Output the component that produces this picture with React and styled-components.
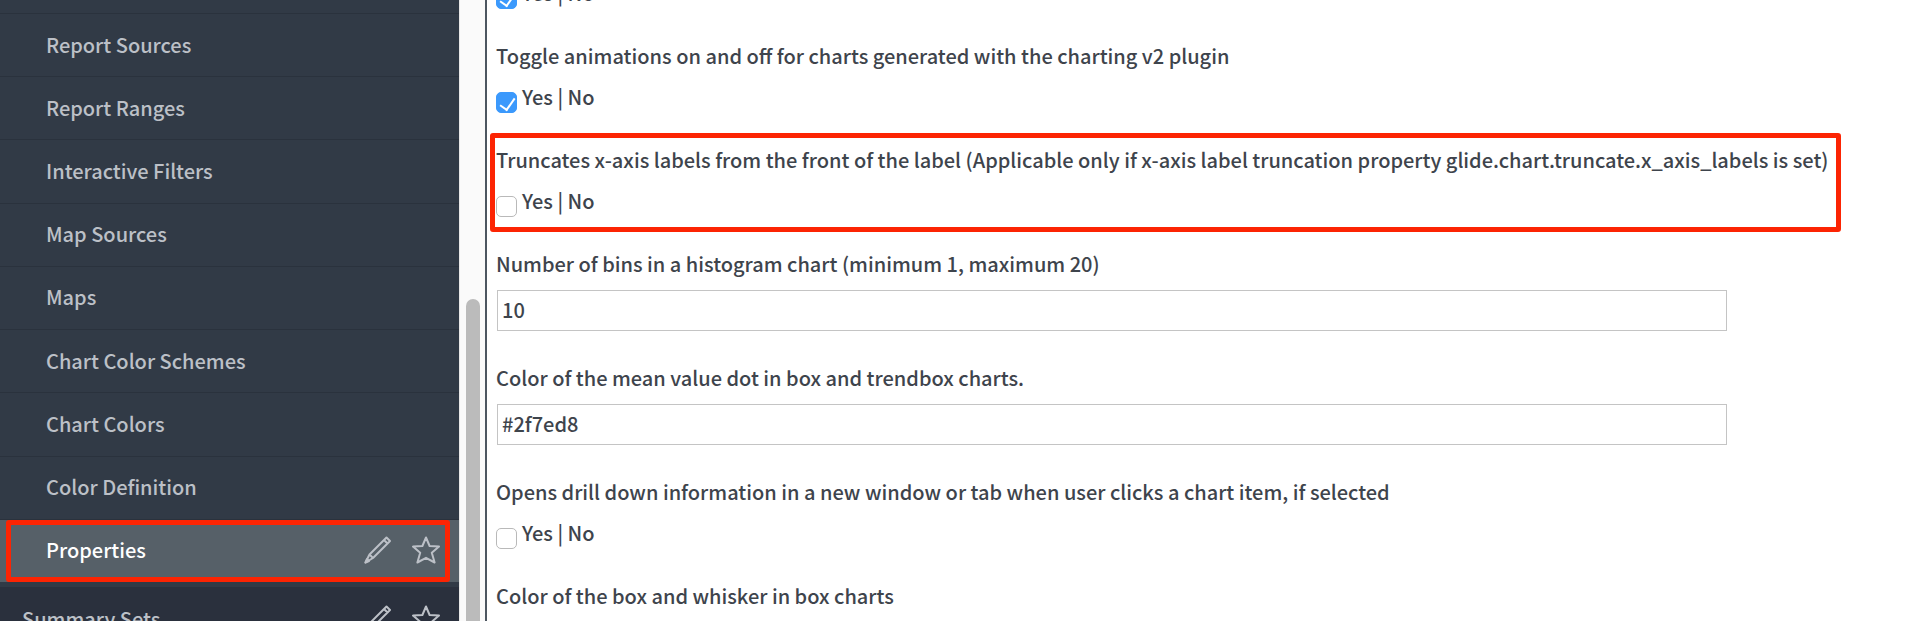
import React from 'react'
import styled, { createGlobalStyle } from 'styled-components'

const navItems = [
    'Report Sources',
    'Report Ranges',
    'Interactive Filters',
    'Map Sources',
    'Maps',
    'Chart Color Schemes',
    'Chart Colors',
    'Color Definition',
    'Properties',
]

const properties = [
    { id: 'animations', type: 'bool', checked: true, label: 'Toggle animations on and off for charts generated with the charting v2 plugin' },
    { id: 'truncate', type: 'bool', marked: true, label: 'Truncates x-axis labels from the front of the label (Applicable only if x-axis label truncation property glide.chart.truncate.x_axis_labels is set)' },
    { id: 'bins', type: 'text', value: '10', label: 'Number of bins in a histogram chart (minimum 1, maximum 20)' },
    { id: 'mean', type: 'text', value: '#2f7ed8', label: 'Color of the mean value dot in box and trendbox charts.' },
    { id: 'drill', type: 'bool', label: 'Opens drill down information in a new window or tab when user clicks a chart item, if selected' },
]

function PencilIcon() {
    return (
        <Icon viewBox="0 0 28 28">
            <path d="M1.5 26.5 L5.5 18.5 L22.5 1.5 L26 5 L9 22 Z M5.5 18.5 L9 22 M20 4 L23.5 7.5" />
            <path d="M1.5 26.5 L3 23 L5 25 Z" fill="currentColor" />
        </Icon>
    )
}

function StarIcon() {
    return (
        <Icon viewBox="0 0 28 28">
            <path d="M14 1.5 L17.6 10 L27 10.6 L19.8 16.7 L22.6 26.5 L14 21.8 L5.4 26.5 L8.2 16.7 L1 10.6 L10.4 10 Z" />
        </Icon>
    )
}

function RowActions({ name }) {
    return (
        <Actions>
            <IconButton aria-label={`Edit ${name}`}><PencilIcon /></IconButton>
            <IconButton aria-label={`Favorite ${name}`}><StarIcon /></IconButton>
        </Actions>
    )
}

function BoolControl({ id, checked }) {
    return (
        <BoolRow>
            <Checkbox type="checkbox" id={id} defaultChecked={checked} />
            <label htmlFor={id}>Yes | No</label>
        </BoolRow>
    )
}

function Property({ id, type, label, value, checked, marked }) {
    return (
        <Field $type={type}>
            <FieldLabel htmlFor={id}>{label}</FieldLabel>
            {type === 'text'
                ? <TextInput id={id} defaultValue={value} />
                : <BoolControl id={id} checked={checked} />}
            {marked && <FieldMark />}
        </Field>
    )
}

function App() {
    return (
        <Page>
            <GlobalStyle />
            <Sidebar>
                <NavList>
                    {navItems.map((item) => (
                        <NavItem key={item} $active={item === 'Properties'}>
                            <NavLink href="#">{item}</NavLink>
                            {item === 'Properties' && <RowActions name={item} />}
                            {item === 'Properties' && <NavMark />}
                        </NavItem>
                    ))}
                </NavList>
                <SectionHeader>
                    <NavLink href="#">Summary Sets</NavLink>
                    <RowActions name="Summary Sets" />
                </SectionHeader>
            </Sidebar>
            <Gutter>
                <Thumb />
            </Gutter>
            <Content>
                <BoolControl id="previous" checked />
                {properties.map((p) => <Property key={p.id} {...p} />)}
                <FieldTitle>Color of the box and whisker in box charts</FieldTitle>
            </Content>
        </Page>
    )
}

export default App

const GlobalStyle = createGlobalStyle`
    * {
        box-sizing: border-box;
    }

    body {
        margin: 0;
        overflow: hidden;
        background: #fff;
        color: #3e444c;
        font-family: "Noto Sans CJK SC", "Noto Sans", sans-serif;
        font-size: 20px;
        font-weight: 500;
        line-height: 28px;
    }
`

const Page = styled.div`
    display: flex;
    height: 100vh;
    overflow: hidden;
`

const Sidebar = styled.nav`
    flex: 0 0 459px;
    padding-top: 13px;
    overflow: hidden;
    background: #313a46;
`

const NavList = styled.ul`
    display: grid;
    grid-auto-rows: 1fr;
    height: 569px;
    margin: 0 0 5px;
    padding: 0;
    list-style: none;
`

const NavItem = styled.li`
    position: relative;
    display: flex;
    align-items: center;
    justify-content: space-between;
    padding: 0 19px 1px 46px;
    border-top: 1px solid #2a323d;
    background: ${(props) => (props.$active ? '#566068' : 'transparent')};
    color: ${(props) => (props.$active ? '#fff' : '#bcc0c7')};
`

const NavLink = styled.a`
    color: inherit;
    text-decoration: none;
`

const SectionHeader = styled.div`
    display: flex;
    align-items: center;
    justify-content: space-between;
    height: 63px;
    padding: 0 19px 0 22px;
    background: #2a303d;
    color: #bcc0c7;
`

const Actions = styled.div`
    display: flex;
    gap: 20px;
`

const IconButton = styled.button`
    display: flex;
    padding: 0;
    border: 0;
    background: none;
    color: #bcc0c7;
`

const Icon = styled.svg`
    width: 28px;
    height: 28px;
    fill: none;
    stroke: currentColor;
    stroke-width: 2;
    stroke-linejoin: round;
`

const Mark = styled.div`
    position: absolute;
    border: 5px solid #fc2403;
    border-radius: 3px;
    pointer-events: none;
`

const NavMark = styled(Mark)`
    inset: 0 9px 0 6px;
`

const FieldMark = styled(Mark)`
    inset: -13px 79px 18px -6px;
`

const Gutter = styled.div`
    display: flex;
    flex: 0 0 28px;
    padding: 299px 5px 0 6px;
    border-left: 1px solid #e8e8e8;
    border-right: 2px solid #4d5660;
    background: #fafafa;
`

const Thumb = styled.div`
    flex: 1;
    border-radius: 7px 7px 0 0;
    background: #bbb;
`

const Content = styled.main`
    flex: 1;
    min-width: 0;
    margin-top: -34px;
    padding-left: 9px;
`

const Field = styled.div`
    position: relative;
    height: ${(props) => (props.$type === 'text' ? 114 : 104)}px;
`

const FieldLabel = styled.label`
    display: block;
    white-space: nowrap;
`

const FieldTitle = styled.div``

const BoolRow = styled.div`
    display: flex;
    gap: 5px;
    height: 28px;
    margin: 13px 0 35px;
`

const Checkbox = styled.input`
    appearance: none;
    width: 21px;
    height: 21px;
    margin: 9px 0 0;
    border: 1px solid #b9b9b9;
    border-radius: 5px;
    background: #fff;

    &:checked {
        border-color: #3b99fc;
        background: #3b99fc;
    }

    &:checked::after {
        content: '';
        display: block;
        width: 7px;
        height: 13px;
        margin: 2px 0 0 6px;
        border: solid #fff;
        border-width: 0 2px 2px 0;
        transform: rotate(35deg);
    }
`

const TextInput = styled.input`
    display: block;
    width: calc(100% - 194px);
    height: 41px;
    margin: 12px 0 0 1px;
    padding: 0 4px 2px;
    border: 1px solid #c4c4c4;
    background: #fff;
    color: inherit;
    font: inherit;
`
